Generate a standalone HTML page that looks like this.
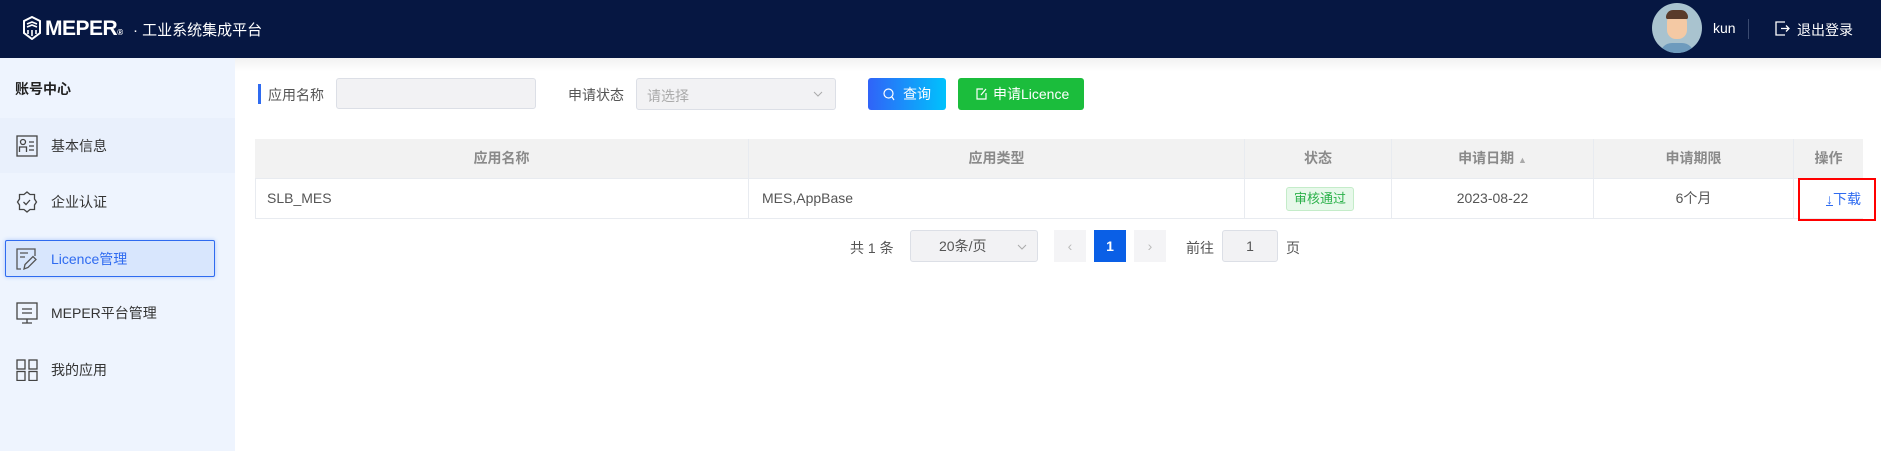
<!DOCTYPE html>
<html><head><meta charset="utf-8"><style>
*{margin:0;padding:0;box-sizing:border-box}
body{width:1881px;height:451px;overflow:hidden;background:#fff;font-family:"Liberation Sans","Noto Sans CJK SC",sans-serif;position:relative;font-size:14px;color:#555}
.a{position:absolute}
.hdr{left:0;top:0;width:1881px;height:58px;background:#061742;color:#fff}
.side{left:0;top:58px;width:235px;height:393px;background:#eef4fe}
.mi{position:absolute;left:0;width:235px;height:30px;line-height:30px;font-size:14px;color:#333}
.mi svg{position:absolute;left:16px;top:4px}
.mi span{position:absolute;left:51px}
.th{position:absolute;top:139px;height:39px;line-height:39px;text-align:center;color:#8a8a8a;font-weight:bold;font-size:14px;border-right:1px solid #e8ebf0}
.td{position:absolute;top:178px;height:41px;line-height:41px;font-size:14px;color:#555;border-right:1px solid #e8ebf0}
</style></head><body>
<div class="a hdr">
 <svg class="a" style="left:23px;top:16px" width="18" height="24" viewBox="0 0 18 24"><path d="M9 1 L17 5 V17 L9 23 L1 17 V5 Z" fill="none" stroke="#fff" stroke-width="2"/><path d="M4 8 L9 6 L14 8 M4 11 L9 9 L14 11 M5 14 V18 M13 14 V18 M9 14 V20" stroke="#fff" stroke-width="1.6" fill="none"/></svg>
 <div class="a" style="left:45px;top:17px;font-size:21px;font-weight:bold;letter-spacing:-0.5px">MEPER<span style="font-size:8px">®</span></div>
 <div class="a" style="left:133px;top:19px;font-size:15px">· 工业系统集成平台</div>
 <div class="a" style="left:1652px;top:3px;width:50px;height:50px;border-radius:50%;background:#a9c3cf;overflow:hidden">
  <div class="a" style="left:15px;top:10px;width:20px;height:26px;border-radius:9px;background:#f4c9a4"></div>
  <div class="a" style="left:14px;top:7px;width:22px;height:9px;border-radius:8px 8px 2px 2px;background:#5a3b2a"></div>
  <div class="a" style="left:8px;top:40px;width:34px;height:14px;border-radius:12px 12px 0 0;background:#6e9bbd"></div>
 </div>
 <div class="a" style="left:1713px;top:20px;font-size:14px">kun</div>
 <div class="a" style="left:1748px;top:19px;width:1px;height:20px;background:#3a4a70"></div>
 <svg class="a" style="left:1775px;top:21px" width="15" height="15" viewBox="0 0 15 15"><path d="M10 1 H1 V14 H10 M6 7.5 H14 M11 4.5 L14 7.5 L11 10.5" fill="none" stroke="#fff" stroke-width="1.3"/></svg>
 <div class="a" style="left:1797px;top:20px;font-size:14px">退出登录</div>
</div>
<div class="a side">
 <div class="a" style="left:15px;top:21px;font-size:14px;font-weight:bold;color:#222">账号中心</div>
 <div class="a" style="left:0;top:60px;width:235px;height:55px;background:#e9f0fc"></div>
 <div class="mi" style="top:73px"><svg width="22" height="22" viewBox="0 0 22 22" fill="none" stroke="#444" stroke-width="1.3"><rect x="1" y="1" width="20" height="20"/><circle cx="7" cy="7" r="2.5"/><path d="M3.5 17 V12 H10.5 V17 M13 7 H18 M13 11 H18 M13 15 H18"/></svg><span>基本信息</span></div>
 <div class="mi" style="top:129px"><svg width="22" height="22" viewBox="0 0 22 22" fill="none" stroke="#444" stroke-width="1.3"><path d="M11 1 L14 3.5 H18.5 V8 L20.5 11 L18.5 14 V18.5 H14 L11 21 L8 18.5 H3.5 V14 L1.5 11 L3.5 8 V3.5 H8 Z"/><path d="M7.5 11 L10 13.5 L14 9"/></svg><span>企业认证</span></div>
 <div class="a" style="left:5px;top:182px;width:210px;height:37px;border:1px solid #2f6bf0;background:#d8e6fd;border-radius:2px;box-shadow:0 0 4px #a9c6fb"></div>
 <div class="mi" style="top:186px;color:#2f6bf0"><svg width="22" height="22" viewBox="0 0 22 22" fill="none" stroke="#555" stroke-width="1.3"><path d="M19 8 V1 H1 V21 H5 M4 5 H12 M4 9 H9"/><path d="M8 21 L9 16.5 L17 8.5 L20 11.5 L12 19.5 Z"/></svg><span>Licence管理</span></div>
 <div class="mi" style="top:240px"><svg width="22" height="22" viewBox="0 0 22 22" fill="none" stroke="#444" stroke-width="1.3"><rect x="1" y="1" width="20" height="16"/><path d="M6 7 H16 M6 11 H16 M11 17 V21 M6 21 H16"/></svg><span>MEPER平台管理</span></div>
 <div class="mi" style="top:297px"><svg width="22" height="22" viewBox="0 0 22 22" fill="none" stroke="#444" stroke-width="1.3"><rect x="1" y="1" width="8" height="9"/><rect x="13" y="1" width="8" height="9"/><rect x="1" y="12.5" width="8" height="9"/><rect x="13" y="12.5" width="8" height="9"/></svg><span>我的应用</span></div>
</div>
<div class="a" style="left:235px;top:58px;width:1646px;height:14px;background:linear-gradient(#f2f2f2,#fff)"></div>
<div class="a" style="left:258px;top:84px;width:3px;height:20px;background:#2f6bf0"></div>
<div class="a" style="left:268px;top:85px;color:#555">应用名称</div>
<div class="a" style="left:336px;top:78px;width:200px;height:31px;background:#f2f2f4;border:1px solid #dcdfe6;border-radius:3px"></div>
<div class="a" style="left:568px;top:85px;color:#555">申请状态</div>
<div class="a" style="left:636px;top:78px;width:200px;height:32px;background:#f2f2f4;border:1px solid #dcdfe6;border-radius:3px"><span class="a" style="left:10px;top:7px;color:#aaa">请选择</span><svg class="a" style="left:176px;top:12px" width="10" height="7" viewBox="0 0 10 7"><path d="M1 1 L5 5 L9 1" fill="none" stroke="#aaa"/></svg></div>
<div class="a" style="left:868px;top:78px;width:78px;height:32px;border-radius:3px;background:linear-gradient(90deg,#3063f8,#00c2fc);color:#fff;line-height:32px"><svg class="a" style="left:15px;top:10px" width="12" height="13" viewBox="0 0 12 13"><circle cx="5.5" cy="5.5" r="4.5" fill="none" stroke="#fff" stroke-width="1.2"/><path d="M9 9 L11 12" stroke="#fff" stroke-width="1.2"/></svg><span class="a" style="left:35px">查询</span></div>
<div class="a" style="left:958px;top:78px;width:126px;height:32px;border-radius:3px;background:#1bbd3c;color:#fff;line-height:32px"><svg class="a" style="left:18px;top:10px" width="11" height="12" viewBox="0 0 11 12"><path d="M7 1 H1 V11 H10 V5 M5 7 L10 1" fill="none" stroke="#fff" stroke-width="1.2"/></svg><span class="a" style="left:35px">申请Licence</span></div>
<div class="a" style="left:255px;top:139px;width:1608px;height:80px;border:1px solid #e8ebf0;border-right:none"></div>
<div class="a" style="left:255px;top:139px;width:1608px;height:39px;background:#f2f2f2"></div>
<div class="a" style="left:255px;top:178px;width:1608px;height:1px;background:#e8ebf0"></div>
<div class="th" style="left:255px;width:494px">应用名称</div>
<div class="th" style="left:749px;width:496px">应用类型</div>
<div class="th" style="left:1245px;width:147px">状态</div>
<div class="th" style="left:1392px;width:202px">申请日期 <span style="font-size:9px;color:#aaa">▲</span></div>
<div class="th" style="left:1594px;width:200px">申请期限</div>
<div class="th" style="left:1794px;width:69px;border:none">操作</div>
<div class="td" style="left:255px;width:494px;padding-left:12px">SLB_MES</div>
<div class="td" style="left:749px;width:496px;padding-left:13px">MES,AppBase</div>
<div class="td" style="left:1245px;width:147px"></div>
<div class="a" style="left:1286px;top:187px;width:68px;height:24px;background:#e7f8ea;border:1px solid #c4ecc9;border-radius:3px;color:#2bb14a;font-size:13px;line-height:22px;text-align:center">审核通过</div>
<div class="td" style="left:1392px;width:202px;text-align:center">2023-08-22</div>
<div class="td" style="left:1594px;width:200px;text-align:center">6个月</div>
<div class="a" style="left:1798px;top:178px;width:78px;height:43px;border:2px solid #f00"></div>
<div class="a" style="left:1826px;top:189px;color:#2f6bf0;font-size:14px"><span style="text-decoration:underline">↓</span>下载</div>
<div class="a" style="left:850px;top:238px;color:#555">共 1 条</div>
<div class="a" style="left:910px;top:230px;width:128px;height:32px;background:#f2f2f4;border:1px solid #dcdfe6;border-radius:3px;line-height:30px;padding-left:28px;color:#555">20条/页<svg class="a" style="left:106px;top:13px" width="10" height="7" viewBox="0 0 10 7"><path d="M1 1 L5 5 L9 1" fill="none" stroke="#aaa"/></svg></div>
<div class="a" style="left:1054px;top:230px;width:32px;height:32px;background:#f4f4f6;color:#bbb;text-align:center;line-height:32px">‹</div>
<div class="a" style="left:1094px;top:230px;width:32px;height:32px;background:#0a5fe6;color:#fff;text-align:center;line-height:32px;font-weight:bold">1</div>
<div class="a" style="left:1134px;top:230px;width:32px;height:32px;background:#f4f4f6;color:#bbb;text-align:center;line-height:32px">›</div>
<div class="a" style="left:1186px;top:238px;color:#555">前往</div>
<div class="a" style="left:1222px;top:230px;width:56px;height:32px;background:#f2f2f4;border:1px solid #dcdfe6;border-radius:3px;text-align:center;line-height:30px">1</div>
<div class="a" style="left:1286px;top:238px;color:#555">页</div>
</body></html>
